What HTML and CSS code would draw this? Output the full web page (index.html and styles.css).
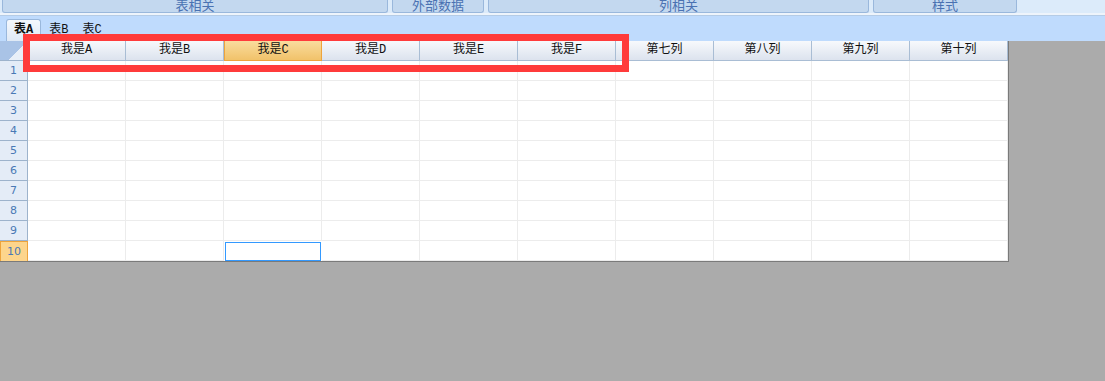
FILE: index.html
```html
<!DOCTYPE html>
<html>

<head>
    <meta charset="UTF-8" name="viewport" content="width=device-width, initial-scale=1.0">
    <title>表格</title>
    <link rel="stylesheet" href="styles.css">
</head>

<body>
    <div class="ribbon">
        <div class="rbtn w1">表相关</div>
        <div class="rbtn w2">外部数据</div>
        <div class="rbtn w3">列相关</div>
        <div class="rbtn w4">样式</div>
    </div>
    <div class="tabbar">
        <div class="tab active">表A</div>
        <div class="tab">表B</div>
        <div class="tab">表C</div>
    </div>
    <div class="sheet">
        <div class="grid" id="grid">
            <div class="corner"></div>
            <div class="hcell">我是A</div>
            <div class="hcell">我是B</div>
            <div class="hcell hsel">我是C</div>
            <div class="hcell">我是D</div>
            <div class="hcell">我是E</div>
            <div class="hcell">我是F</div>
            <div class="hcell">第七列</div>
            <div class="hcell">第八列</div>
            <div class="hcell">第九列</div>
            <div class="hcell">第十列</div>
        </div>
        <div class="mark"></div>
    </div>
    <script>
        var grid = document.getElementById("grid");
        for (var r = 1; r <= 10; r++) {
            var rh = document.createElement("div");
            rh.className = r === 10 ? "rhead rsel" : "rhead";
            rh.innerHTML = r;
            grid.appendChild(rh);
            for (var c = 0; c < 10; c++) {
                var cell = document.createElement("div");
                cell.className = "cell";
                if (r === 10 && c === 2) {
                    cell.className = "cell active";
                }
                grid.appendChild(cell);
            }
        }
    </script>
</body>

</html>
```

FILE: styles.css
```css
body {
    margin: 0;
    background-color: #ababab;
    font-family: "Noto Sans CJK SC", "DejaVu Sans", sans-serif;
    font-size: 12px;
}

.ribbon {
    display: flex;
    gap: 4px;
    height: 13px;
    padding: 0 2px;
    background-color: #dcebfa;
    border-bottom: 2px solid #eef4fb;
}

.rbtn {
    height: 12px;
    background-color: #c3d8ef;
    border: 1px solid #9ab8dc;
    border-top: none;
    border-radius: 0 0 3px 3px;
    color: #4a72b2;
    font-size: 13px;
    line-height: 9px;
    text-align: center;
    overflow: hidden;
}

.w1 { width: 384px; }
.w2 { width: 90px; }
.w3 { width: 379px; }
.w4 { width: 142px; }

.tabbar {
    display: flex;
    align-items: flex-end;
    height: 26px;
    padding-left: 6px;
    background-color: #bfdbfd;
    border-top: 1px solid #b5cce6;
    box-sizing: border-box;
}

.tab {
    height: 21px;
    padding: 0 7px;
    line-height: 21px;
    color: #111;
    font-family: "Liberation Mono", "Noto Sans CJK SC", monospace;
    font-size: 12px;
}

.tab.active {
    font-weight: bold;
    background: linear-gradient(#f4f8fd, #dfe9f5);
    border: 1px solid #9ab8dc;
    border-bottom: none;
    border-radius: 3px 3px 0 0;
    margin-right: 1px;
}

.sheet {
    position: relative;
    width: 1009px;
}

.grid {
    display: grid;
    grid-template-columns: 28px repeat(10, 98px);
    grid-auto-rows: 20px;
    background-color: #fff;
    border-right: 1px solid #7a7a7a;
    border-bottom: 1px solid #7a7a7a;
}

.grid div {
    box-sizing: border-box;
}

.corner {
    background: linear-gradient(135deg, #a9c3e6 60%, #e8eff8 60%);
    border-right: 1px solid #9db3cc;
    border-bottom: 1px solid #9db3cc;
}

.hcell {
    background: linear-gradient(#f7f9fc, #dce3ee);
    border-right: 1px solid #a9bdd4;
    border-bottom: 1px solid #a9bdd4;
    text-align: center;
    line-height: 19px;
    color: #111;
    font-family: "Liberation Mono", "Noto Sans CJK SC", monospace;
}

.hcell.hsel {
    background: linear-gradient(#f9dc9e, #f1c26a);
    border: 1px solid #eea43c;
    border-top: none;
}

.rhead {
    background-color: #e4ecf7;
    border-right: 1px solid #9db3cc;
    border-bottom: 1px solid #9db3cc;
    color: #4979b5;
    font-family: "DejaVu Sans", sans-serif;
    font-size: 11px;
    line-height: 19px;
    text-align: center;
}

.rhead.rsel {
    background-color: #fdd58c;
    border: 1px solid #eea43c;
    border-bottom: none;
}

.cell {
    border-right: 1px solid #ececec;
    border-bottom: 1px solid #ececec;
}

.cell.active {
    border: 1px solid #3399ff;
    margin: 1px 1px 0 1px;
}

.mark {
    position: absolute;
    left: 23px;
    top: -7px;
    width: 606px;
    height: 38px;
    border: 7px solid #ff3b3b;
    box-sizing: border-box;
}
```
